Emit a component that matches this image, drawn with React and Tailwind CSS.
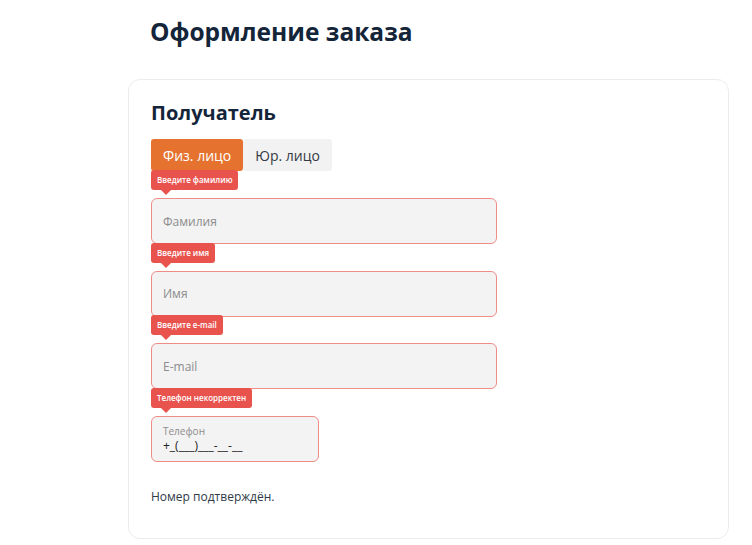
import { useState } from 'react';

const FIELDS = [
  { key: 'last', placeholder: 'Фамилия', error: 'Введите фамилию' },
  { key: 'first', placeholder: 'Имя', error: 'Введите имя' },
  { key: 'email', placeholder: 'E-mail', error: 'Введите e-mail' },
];

function Tip({ children }) {
  return (
    <div className="absolute left-0 -top-[28px] z-10">
      <div className="relative bg-[#e8534e] text-white text-[8px] font-semibold leading-[20px] px-[6px] rounded-[3px] whitespace-nowrap">
        {children}
        <span className="absolute left-[10px] top-full w-0 h-0 border-x-[5px] border-x-transparent border-t-[5px] border-t-[#e8534e]" />
      </div>
    </div>
  );
}

export default function App() {
  const [kind, setKind] = useState('fiz');

  return (
    <div className="min-h-[545px] bg-white pl-[128px] pr-[23px]" style={{ fontFamily: "'Open Sans', 'Noto Sans', sans-serif" }}>
      <h1 className="pl-[22px] pt-[16px] text-[24.5px] leading-[32px] font-bold text-[#14253a]">Оформление заказа</h1>

      <div className="mt-[31px] border border-[#ececec] rounded-[12px] px-[22px] pt-[19px] pb-[33px]">
        <h2 className="text-[20px] leading-[28px] font-bold text-[#14253a]">Получатель</h2>

        <div className="mt-[12px] flex">
          {[['fiz', 'Физ. лицо'], ['yur', 'Юр. лицо']].map(([k, label]) => (
            <button key={k}
              onClick={() => setKind(k)}
              className={`h-[32px] px-[12px] text-[14px] rounded-[3px] ${
                kind === k ? 'bg-[#e5732f] text-white' : 'bg-[#f2f2f2] text-[#333b45]'
              }`}>
              {label}
            </button>
          ))}
        </div>

        <div className="mt-[27px] flex flex-col gap-[26.5px]">
          {FIELDS.map(f => (
            <div key={f.key} className="relative w-[346px]">
              <Tip>{f.error}</Tip>
              <input
                placeholder={f.placeholder}
                className="w-full h-[46px] px-[11px] bg-[#f3f3f3] border border-[#f08c86] rounded-[6px] text-[12px] text-[#333] placeholder:text-[#8c8c8c] outline-none" />
            </div>
          ))}

          <div className="relative w-[168px]">
            <Tip>Телефон некорректен</Tip>
            <div className="h-[46px] px-[11px] pt-[7px] bg-[#f3f3f3] border border-[#f08c86] rounded-[6px]">
              <div className="text-[10px] leading-[14px] text-[#8c8c8c]">Телефон</div>
              <div className="text-[12px] leading-[16px] text-[#222]">+_(___)___-__-__</div>
            </div>
          </div>
        </div>

        <p className="mt-[27px] text-[12px] leading-[16px] text-[#2e3a48]">Номер подтверждён.</p>
      </div>
    </div>
  );
}
